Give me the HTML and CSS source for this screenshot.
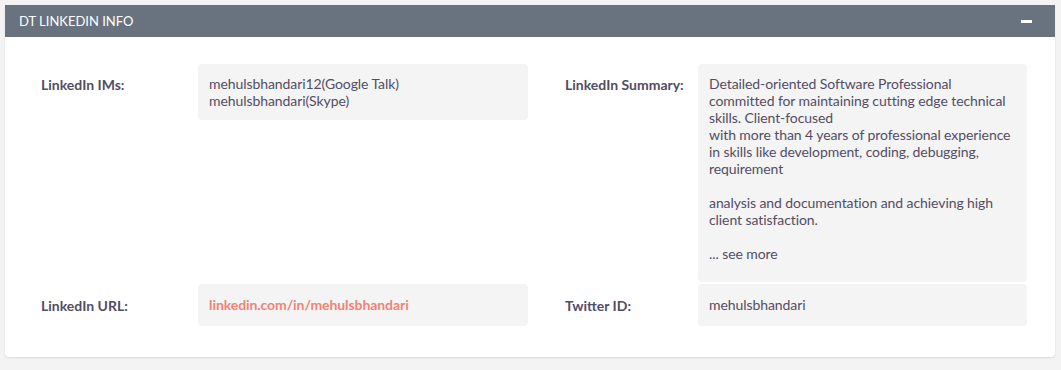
FILE: index.html
```html
<!DOCTYPE html>
<html lang="en">
<head>
    <meta charset="UTF-8">
    <title>DT LinkedIn Info</title>
    <link rel="stylesheet" href="styles.css">
</head>
<body>

<div class="panel">
    <div class="panel-heading">
        <span class="panel-title">DT LINKEDIN INFO</span>
        <span class="collapse-icon"></span>
    </div>

    <div class="panel-body">
        <!-- Row 1 -->
        <div class="field-label">LinkedIn IMs:</div>
        <div class="field-value">
            mehulsbhandari12(Google Talk)<br>
            mehulsbhandari(Skype)
        </div>
        <div class="field-label right">LinkedIn Summary:</div>
        <div class="field-value summary">
            Detailed-oriented Software Professional committed for maintaining cutting edge technical skills. Client-focused<br>
            with more than 4 years of professional experience in skills like development, coding, debugging, requirement<br>
            <br>
            analysis and documentation and achieving high client satisfaction.<br>
            <br>
            ... see more
        </div>

        <!-- Row 2 -->
        <div class="field-label single">LinkedIn URL:</div>
        <div class="field-value single">
            <a href="#" class="link">linkedin.com/in/mehulsbhandari</a>
        </div>
        <div class="field-label right single">Twitter ID:</div>
        <div class="field-value single">mehulsbhandari</div>
    </div>
</div>

</body>
</html>
```

FILE: styles.css
```css
body {
    font-family: Lato, "Open Sans", sans-serif;
    font-size: 14px;
    background-color: #f3f3f3;
    color: #534d64;
    margin: 0;
    padding: 5px;
}
.panel {
    background-color: #fff;
    border-radius: 0 0 4px 4px;
    box-shadow: 0 1px 2px rgba(0, 0, 0, 0.1);
    width: 1050px;
}
.panel-heading {
    height: 32px;
    background-color: #69737f;
    display: flex;
    align-items: center;
    justify-content: space-between;
    padding: 0 23px 0 14px;
}
.panel-title {
    color: #fff;
    font-size: 13px;
}
.collapse-icon {
    width: 11px;
    height: 3px;
    background-color: #fff;
    margin-top: 1px;
}
.panel-body {
    display: grid;
    grid-template-columns: 157px 330px 170px 329px;
    row-gap: 2px;
    padding: 27px 28px 31px 36px;
    line-height: 17px;
}
.field-label {
    font-weight: bold;
    padding-top: 12px;
}
.field-label.right {
    padding-left: 37px;
}
.field-label.single {
    padding-top: 13px;
}
.field-value {
    background-color: #f4f4f4;
    border-radius: 4px;
    padding: 11px;
    align-self: start;
    letter-spacing: -0.08px;
}
.field-value.summary {
    padding-bottom: 20px;
}
.field-value.single {
    padding: 12px 11px 13px;
}
.link {
    color: #f08377;
    font-weight: bold;
    text-decoration: none;
}
```
